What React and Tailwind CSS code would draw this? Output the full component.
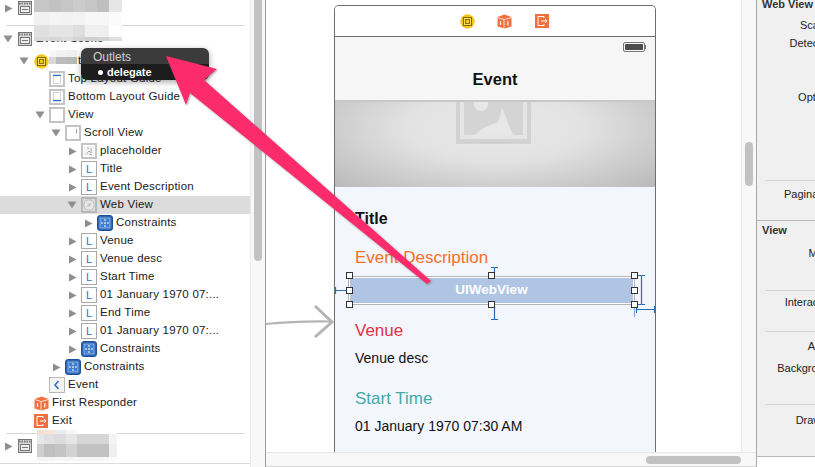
const FONT = "font-['Liberation_Sans',Arial,sans-serif]";

function Tri({ dir }) {
  if (!dir) return <span className="w-4 shrink-0" />;
  return (
    <span className="w-4 shrink-0 pr-[2px] flex items-center justify-center">
      {dir === "r" ? (
        <svg width="9" height="9" viewBox="0 0 9 9"><path d="M1 0.5L8.5 4.5L1 8.5Z" fill="#8f8f8f" /></svg>
      ) : (
        <svg width="10" height="8" viewBox="0 0 10 8"><path d="M0.5 0.5H9.5L5 7.5Z" fill="#8f8f8f" /></svg>
      )}
    </span>
  );
}

const Frame = ({ children }) => (
  <svg width="16" height="16" viewBox="0 0 16 16">
    <rect x="1" y="1" width="14" height="14" fill="#fff" stroke="#c4c4c4" strokeWidth="2" />
    {children}
  </svg>
);

const SceneIcon = () => (
  <svg width="16" height="14" viewBox="0 0 16 14">
    <rect x="1.5" y="0.5" width="13" height="13" fill="#d8d8d8" stroke="#777" />
    <path d="M2 2.5H14" stroke="#777" strokeWidth="2" strokeDasharray="1.5 1" />
    <rect x="3.5" y="5.5" width="9" height="6" fill="#eee" stroke="#777" />
    <path d="M5 8.5H11" stroke="#777" />
  </svg>
);

const TopGuide = () => <Frame><rect x="4.5" y="3.5" width="7" height="9" fill="#fff" stroke="#bbb" strokeWidth="0.6" /><path d="M4 4.5H12" stroke="#2b73c9" /></Frame>;
const BottomGuide = () => <Frame><rect x="4.5" y="3.5" width="7" height="9" fill="#fff" stroke="#bbb" strokeWidth="0.6" /><path d="M4 11.5H12" stroke="#2b73c9" /></Frame>;
const ViewIcon = () => <Frame />;
const ScrollIcon = () => <Frame><path d="M11.5 4V8.5" stroke="#999" /></Frame>;
const PlaceholderIcon = () => (
  <Frame>
    <rect x="3" y="3" width="10" height="10" fill="#f4f4f4" />
    <path d="M5 11.5L8 8L10 10V5M6 5H8M8 11L11 12" stroke="#aaa" fill="none" />
  </Frame>
);
const WebIcon = () => (
  <svg width="16" height="16" viewBox="0 0 16 16">
    <rect x="1" y="1" width="14" height="14" fill="#dcdcdc" stroke="#b8b8b8" strokeWidth="2" />
    <circle cx="8" cy="8" r="5.2" fill="#e8e8e8" stroke="#bdbdbd" />
    <path d="M10.5 5.5L7 7L5.5 10.5L9 9Z" fill="#c4c4c4" />
  </svg>
);
const LIcon = () => (
  <span className="w-4 h-4 border border-[#a9a9a9] bg-white flex items-center justify-center text-[11px] leading-none text-[#2b73c9]">L</span>
);
const ConstraintIcon = () => (
  <svg width="16" height="16" viewBox="0 0 16 16">
    <rect x="0.5" y="0.5" width="15" height="15" rx="2.5" fill="#2c66b6" stroke="#1f4f96" />
    <rect x="3" y="3" width="10" height="10" fill="#3f7fd0" stroke="#dbe8f8" strokeWidth="0.5" />
    <path d="M8 4V6M8 10V12M4 8H6M10 8H12" stroke="#fff" />
    <rect x="7.25" y="7.25" width="1.5" height="1.5" fill="#fff" />
  </svg>
);
const BackIcon = () => (
  <svg width="16" height="16" viewBox="0 0 16 16">
    <rect x="0.5" y="0.5" width="15" height="15" fill="#f4f4f4" stroke="#b8b8b8" />
    <path d="M9.5 4L6 8L9.5 12" fill="none" stroke="#2b73c9" strokeWidth="1.6" />
  </svg>
);
const VcIcon = ({ size = 15 }) => (
  <svg width={size} height={size} viewBox="0 0 15 15">
    <circle cx="7.5" cy="7.5" r="7.2" fill="#f5c518" />
    <rect x="3.5" y="3.5" width="8" height="8" fill="#f9dc62" stroke="#7d6a10" />
    <rect x="5.5" y="5.5" width="4" height="4" fill="#f5c518" stroke="#8a7412" />
  </svg>
);
const CubeIcon = ({ size = 15 }) => (
  <svg width={size} height={size} viewBox="0 0 15 15">
    <path d="M7.5 0.5L14.5 3V12.5L7.5 14.5L0.5 12.5V3Z" fill="#f2703d" />
    <path d="M0.5 3.5L7 5.5V14M7.5 5.5L14.5 3.5" stroke="#fff" strokeWidth="0.8" fill="none" />
    <path d="M3.5 7.2V11M10.8 7V11.5" stroke="#fff" strokeWidth="1.2" fill="none" />
  </svg>
);
const ExitIcon = ({ size = 14 }) => (
  <svg width={size} height={size} viewBox="0 0 14 14">
    <rect width="14" height="14" fill="#f2703d" />
    <path d="M9 4V2.5H3V11.5H9V10" fill="none" stroke="#fff" />
    <path d="M6 7H12M10 5L12 7L10 9" fill="none" stroke="#fff" />
  </svg>
);

const levelPad = {
  0: "pl-px",
  1: "pl-[17px]",
  2: "pl-[33px]",
  3: "pl-[49px]",
  4: "pl-[65px]",
  5: "pl-[81px]",
};

function Row({ level, dir, icon, text, selected, bold }) {
  return (
    <div className={`h-[18px] flex items-center shrink-0 ${levelPad[level]} ${selected ? "bg-[#dcdcdc]" : ""}`}>
      <Tri dir={dir} />
      <span className="w-4 h-4 shrink-0 flex items-center justify-center">{icon}</span>
      <span className={`ml-[3px] text-[11.5px] tracking-[0.22px] text-[#1a1a1a] whitespace-nowrap leading-none ${bold ? "font-bold" : ""}`}>{text}</span>
    </div>
  );
}

const treeRows = [
  { level: 2, icon: <TopGuide />, text: "Top Layout Guide" },
  { level: 2, icon: <BottomGuide />, text: "Bottom Layout Guide" },
  { level: 2, dir: "d", icon: <ViewIcon />, text: "View" },
  { level: 3, dir: "d", icon: <ScrollIcon />, text: "Scroll View" },
  { level: 4, dir: "r", icon: <PlaceholderIcon />, text: "placeholder" },
  { level: 4, dir: "r", icon: <LIcon />, text: "Title" },
  { level: 4, dir: "r", icon: <LIcon />, text: "Event Description" },
  { level: 4, dir: "d", icon: <WebIcon />, text: "Web View", selected: true },
  { level: 5, dir: "r", icon: <ConstraintIcon />, text: "Constraints" },
  { level: 4, dir: "r", icon: <LIcon />, text: "Venue" },
  { level: 4, dir: "r", icon: <LIcon />, text: "Venue desc" },
  { level: 4, dir: "r", icon: <LIcon />, text: "Start Time" },
  { level: 4, dir: "r", icon: <LIcon />, text: "01 January 1970 07:..." },
  { level: 4, dir: "r", icon: <LIcon />, text: "End Time" },
  { level: 4, dir: "r", icon: <LIcon />, text: "01 January 1970 07:..." },
  { level: 4, dir: "r", icon: <ConstraintIcon />, text: "Constraints" },
  { level: 3, dir: "r", icon: <ConstraintIcon />, text: "Constraints" },
  { level: 2, icon: <BackIcon />, text: "Event" },
  { level: 1, icon: <CubeIcon />, text: "First Responder" },
  { level: 1, icon: <ExitIcon />, text: "Exit" },
];

function Navigator() {
  return (
    <div className="w-[250px] shrink-0 flex flex-col bg-white overflow-hidden">
      <div className="-mt-px"><Row level={0} dir="r" icon={<SceneIcon />} text="" /></div>
      <div className="mt-[8px] mx-[6px] border-t border-[#d6d6d6]" />
      <div className="mt-[4px]"><Row level={0} dir="d" icon={<SceneIcon />} text="Event Scene" /></div>
      <div className="mt-[4px]"><Row level={1} dir="d" icon={<VcIcon />} text={<span className="ml-[26px]">t</span>} /></div>
      {treeRows.map((r, i) => <Row key={i} {...r} />)}
      <div className="mt-[3px] mx-[6px] border-t border-[#d6d6d6]" />
      <div className="mt-[3px]"><Row level={0} dir="r" icon={<SceneIcon />} text="" /></div>
      <div className="mt-[8px] border-t border-[#dcdcdc]" />
    </div>
  );
}

const ScrollStrip = ({ children }) => (
  <div className="w-[15px] shrink-0 bg-[#f8f8f8] border-l border-[#ececec] relative">{children}</div>
);

function PlaceholderArt() {
  return (
    <svg width="76" height="42" viewBox="0 0 76 42" className="block">
      <path d="M0 0H4V37H71V0H75V42H0Z" fill="#d2d2d2" />
      <path d="M8 0H67V33H60C56 33 55 28 53 24C50 16 48 8 46 6C45 9 44 16 42 20C36 23 30 24 26 27C22 30 20 33 16 33H8Z" fill="#d4d4d4" />
      <circle cx="25" cy="2" r="7" fill="#e8e8e8" />
    </svg>
  );
}

function Phone() {
  return (
    <div className="ml-[68px] mt-[5px] w-[322px] flex-1 min-h-0 border-x border-t border-[#6e6e6e] rounded-t-[5px] bg-white flex flex-col overflow-hidden">
      <div className="h-[30px] shrink-0 flex items-center bg-white">
        <span className="ml-[125px] flex"><VcIcon /></span>
        <span className="ml-[22px] flex"><CubeIcon /></span>
        <span className="ml-[23px] flex"><ExitIcon /></span>
      </div>
      <div className="h-[66px] shrink-0 border-t border-[#6e6e6e] border-b-2 border-b-[#c8c8c8] bg-[#f6f6f6] relative flex items-center justify-center">
        <div className="absolute right-[8px] top-[5px] w-[24px] h-[10px] flex items-center">
          <span className="w-[22px] h-[10px] rounded-[2px] border border-[#777] p-px flex"><span className="flex-1 bg-[#4c4c4c] rounded-[1px]" /></span>
          <span className="w-[1px] h-[4px] bg-[#777]" />
        </div>
        <span className="mt-[22px] text-[16.5px] font-bold text-[#111] leading-none">Event</span>
      </div>
      <div className="h-[85px] shrink-0 bg-[radial-gradient(ellipse_at_50%_30%,#e8e8e8_0%,#e2e2e2_40%,#b9b9b9_100%)] flex justify-center">
        <span className="ml-[-2px]"><PlaceholderArt /></span>
      </div>
      <div className="flex-1 bg-[#f3f6fc] pl-[20px] flex flex-col">
        <div className="mt-[22px] h-5 flex items-center text-[16px] font-bold text-[#111]">Title</div>
        <div className="mt-[18px] h-[22px] flex items-center text-[17px] text-[#f2702a]">Event Description</div>
        <div className="mt-[7px] -ml-[7px] w-[287px] h-[29px] border border-[#b4b4b4] p-px bg-white">
          <div className="h-full bg-[#b0c5e3] flex items-center justify-center text-[13.5px] font-bold text-white">UIWebView</div>
        </div>
        <div className="mt-[15px] h-[22px] flex items-center text-[17px] text-[#e2333f]">Venue</div>
        <div className="mt-[7px] h-[18px] flex items-center text-[14px] text-[#111]">Venue desc</div>
        <div className="mt-[21px] h-[22px] flex items-center text-[17px] text-[#45a9a8]">Start Time</div>
        <div className="mt-[7px] h-[18px] flex items-center text-[14px] text-[#111] whitespace-nowrap">01 January 1970 07:30 AM</div>
      </div>
    </div>
  );
}

function Canvas() {
  return (
    <div className="flex-1 min-w-0 flex flex-col border-l border-[#9c9c9c]">
      <div className="flex-1 min-h-0 flex">
        <div className="flex-1 min-w-0 bg-white flex flex-col overflow-hidden"><Phone /></div>
        <ScrollStrip>
          <div className="absolute left-[3px] top-[142px] w-2 h-[44px] rounded bg-[#c2c2c2]" />
        </ScrollStrip>
      </div>
      <div className="h-[15px] shrink-0 bg-[#f8f8f8] border-t border-[#e6e6e6] border-b border-b-[#d8d8d8] relative">
        <div className="absolute left-[380px] top-[3px] w-[95px] h-2 rounded bg-[#c2c2c2]" />
      </div>
    </div>
  );
}

const Lab = ({ cls, children, bold }) => (
  <div className={`h-[18px] flex items-center whitespace-nowrap text-[11px] ${bold ? "font-bold pl-[5px] text-[#333]" : "justify-end text-[#222]"} ${cls}`}>{children}</div>
);
const Sep = ({ cls }) => <div className={`ml-[8px] border-t border-[#d4d4d4] ${cls}`} />;

function Inspector() {
  return (
    <div className="flex-1 min-w-0 border-l border-[#a8a8a8] bg-[#f0f0f0] flex flex-col overflow-hidden">
      <div className="w-[79px] flex-1 flex flex-col">
        <Lab bold cls="-mt-[5px]">Web View</Lab>
        <Lab cls="mt-[3px]">Scaling</Lab>
        <Lab>Detection</Lab>
        <Lab cls="mt-[36px]">Options</Lab>
        <Sep cls="mt-[74px]" />
        <Lab cls="mt-[4px]">Pagination</Lab>
        <div className="mt-[17px] border-t border-[#b8b8b8]" />
        <Lab bold>View</Lab>
        <Lab cls="mt-[5px]">Mode</Lab>
        <Sep cls="mt-[28px]" />
        <Lab cls="mt-[2px]">Interaction</Lab>
        <Sep cls="mt-[20px]" />
        <Lab cls="mt-[5px]">Alpha</Lab>
        <Lab cls="mt-[4px]">Background</Lab>
        <Sep cls="mt-[27px]" />
        <Lab cls="mt-[6px]">Drawing</Lab>
      </div>
      <div className="h-[11px] shrink-0 bg-white border-t border-[#b8b8b8]" />
    </div>
  );
}

function Pixels({ xs, ys, colors }) {
  const out = [];
  colors.forEach((row, r) =>
    row.forEach((c, i) =>
      out.push(<rect key={`${r}-${i}`} x={xs[i]} y={ys[r]} width={xs[i + 1] - xs[i]} height={ys[r + 1] - ys[r]} fill={c} />)
    )
  );
  return <>{out}</>;
}

function Overlay() {
  const blue = "#2a6db5";
  return (
    <svg width="815" height="467" viewBox="0 0 815 467" className="absolute left-0 top-0 pointer-events-none">
      <Pixels
        xs={[34, 49, 61, 73, 85, 97, 109, 122]}
        ys={[0, 12, 25, 37, 41]}
        colors={[
          ["#c6c6c6", "#c2c2c2", "#c6c6c6", "#cbcbcb", "#c6c6c6", "#bfbfbf", "#e6e6e6"],
          ["#f1f1f1", "#f4f4f4", "#f2f2f2", "#f3f3f3", "#f7f7f7", "#f6f6f6", "#fbfbfb"],
          ["#e0e0e0", "#e4e4e4", "#e4e4e4", "#dedede", "#f0f0f0", "#efefef", "#fefefe"],
          ["#dadada", "#d6d6d6", "#dcdcdc", "#d4d4d4", "#cfcfcf", "#d4d4d4", "#e0e0e0"],
        ]}
      />
      <Pixels
        xs={[49, 56, 66, 77]}
        ys={[50, 57, 64]}
        colors={[
          ["#f8f8f8", "#f2f2f2", "#f0f0f0"],
          ["#d8d8d8", "#bcbcbc", "#b8b8b8"],
        ]}
      />
      <Pixels
        xs={[37, 44, 55, 66, 77, 109, 117]}
        ys={[430, 434, 444, 457, 461]}
        colors={[
          ["#f7dccf", "#fbe2d7", "#e8edf0", "#f6f6f6", "#ffffff", "#ffffff"],
          ["#e5e8ea", "#e0e0e0", "#dcdcdc", "#e6e6e6", "#d6d6d6", "#f4f4f4"],
          ["#cfcfcf", "#bfbfbf", "#c4c4c4", "#d2d2d2", "#c2c2c2", "#f0f0f0"],
          ["#f4f4f4", "#f4f4f4", "#f6f6f6", "#f6f6f6", "#f6f6f6", "#fbfbfb"],
        ]}
      />
      <path d="M266 324Q295 321 331 321.5" fill="none" stroke="#b4b4b4" strokeWidth="2.2" />
      <path d="M315 306L332 322L315 337" fill="none" stroke="#b4b4b4" strokeWidth="3" />
      <g stroke={blue} fill="none" strokeWidth="1.2">
        <path d="M491 267.5H498M494.5 267.5V273M494.5 306V319M491 319.5H498" />
        <path d="M335.5 287V294M336 290.5H347" />
        <path d="M636 275.5H645M641.5 275.5V304.5M636 304.5H645" />
        <path d="M636.5 306V313M637 309.5H655M654.5 306V313" />
        <path d="M634.5 306V317" stroke="#86aede" />
      </g>
    </svg>
  );
}

const handleXs = [
  "left-[346px] top-[272px]",
  "left-[488px] top-[272px]",
  "left-[631px] top-[272px]",
  "left-[346px] top-[287px]",
  "left-[631px] top-[287px]",
  "left-[346px] top-[301px]",
  "left-[488px] top-[301px]",
  "left-[631px] top-[301px]",
];

function Handles() {
  return handleXs.map((c) => (
    <span key={c} className={`absolute w-[7px] h-[7px] border border-[#333] bg-white ${c}`} />
  ));
}

function Popover() {
  return (
    <div className="absolute left-[81px] top-[48px] w-[128px] h-[32px] rounded-[6px] overflow-hidden shadow-[0_2px_6px_rgba(0,0,0,0.35)] flex flex-col">
      <div className="h-4 pt-px bg-[#3b3b3b] flex items-center pl-3 text-[12px] text-[#cfcfcf]">Outlets</div>
      <div className="h-4 bg-[#1d1d1d] flex items-center pl-[17px] text-[11px] font-bold text-white">
        <span className="w-[5px] h-[5px] rounded-full bg-white mr-[4px]" />delegate
      </div>
    </div>
  );
}

function PinkArrow() {
  return (
    <svg width="815" height="467" viewBox="0 0 815 467" className="absolute left-0 top-0 pointer-events-none drop-shadow-[1px_1px_1px_rgba(60,80,70,0.45)]">
      <path d="M166 56L217 69L204 80L431 281L427 284L190 93L186 105Z" fill="#fc2c6c" />
    </svg>
  );
}

export default function App() {
  return (
    <div className={`relative w-[815px] h-[467px] flex overflow-hidden bg-white ${FONT}`}>
      <Navigator />
      <ScrollStrip>
        <div className="absolute left-[3px] top-0 w-2 h-[261px] rounded-b bg-[#c2c2c2]" />
      </ScrollStrip>
      <div className="w-[491px] shrink-0 flex"><Canvas /></div>
      <Inspector />
      <Overlay />
      <Handles />
      <Popover />
      <PinkArrow />
    </div>
  );
}
